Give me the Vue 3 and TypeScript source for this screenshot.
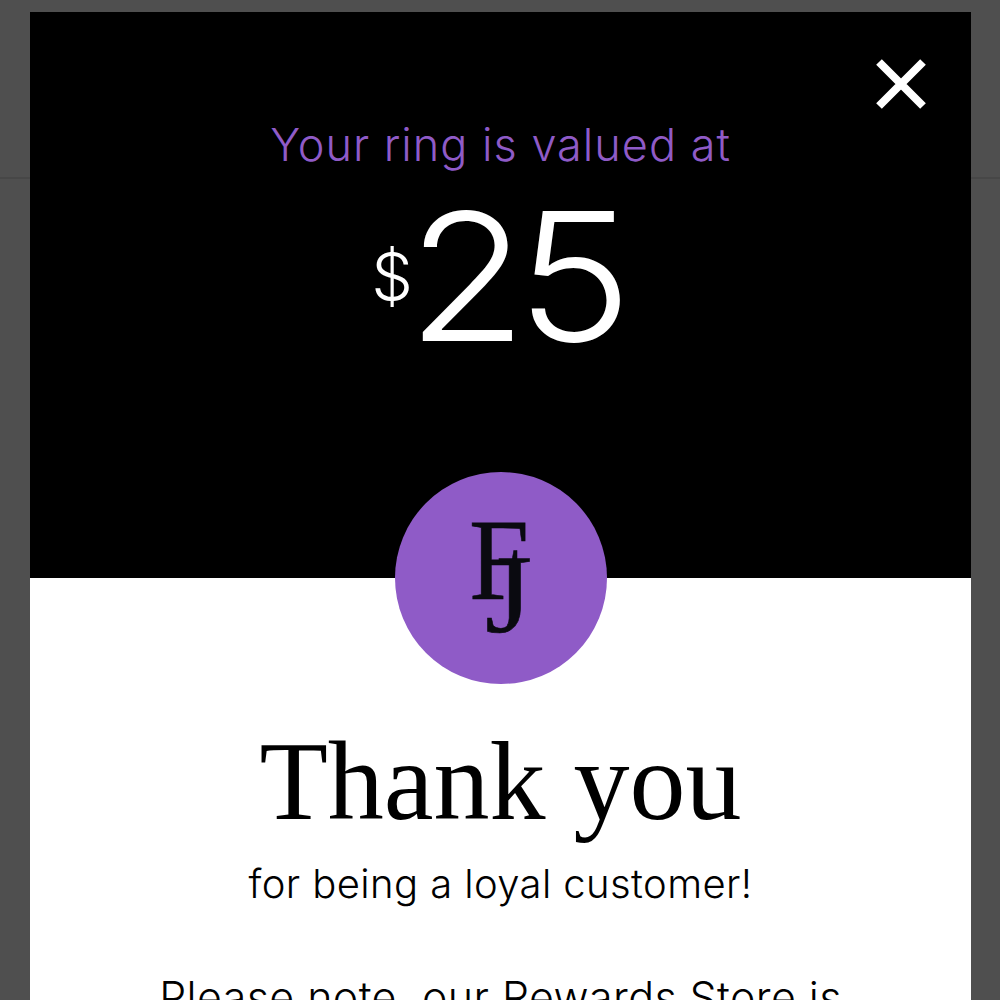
<template>
  <div class="page">
    <div class="page__bar"></div>
    <div class="modal">
      <div class="modal__head">
        <button class="modal__close" aria-label="Close">
          <svg width="50" height="50" viewBox="0 0 50 50">
            <path d="M3 3 L47 47 M47 3 L3 47" stroke="#fff" stroke-width="8" fill="none" />
          </svg>
        </button>
        <div class="modal__label">Your ring is valued at</div>
        <div class="modal__price">
          <span class="modal__currency">$</span>
          <span class="modal__amount">{{ amount }}</span>
        </div>
      </div>
      <div class="modal__logo">
        <svg class="logo" width="212" height="212" viewBox="0 0 212 212">
          <circle cx="106" cy="106" r="106" fill="#8f5bc7" />
          <text x="74" y="127" font-size="117" textLength="60" lengthAdjust="spacingAndGlyphs">F</text>
          <text x="90" y="160" font-size="113" textLength="47" lengthAdjust="spacingAndGlyphs">J</text>
        </svg>
      </div>
      <div class="modal__body">
        <h1 class="modal__title">Thank you</h1>
        <p class="modal__sub">for being a loyal customer!</p>
        <p class="modal__note">Please note, our Rewards Store is</p>
      </div>
    </div>
  </div>
</template>

<script setup lang="ts">
const amount = 25;
</script>

<style>
html,
body {
  height: 100%;
  overflow: hidden;
}
</style>

<style scoped>
.page {
  position: relative;
  height: 1000px;
  overflow: hidden;
  background: #4f4f4f;
  font-family: Inter, "Open Sans", sans-serif;
}

.page__bar {
  height: 177px;
  border-bottom: 2px solid #474747;
}

.modal {
  position: absolute;
  top: 12px;
  left: 30px;
  width: 941px;
  height: 1100px;
  background: #fff;
}

.modal__head {
  position: relative;
  height: 566px;
  box-sizing: border-box;
  padding-top: 106px;
  background: #000;
  text-align: center;
}

.modal__close {
  position: absolute;
  top: 47px;
  right: 45px;
  width: 50px;
  height: 50px;
  padding: 0;
  border: none;
  background: none;
}

.modal__label {
  color: #8f5bc7;
  font-size: 45px;
  font-weight: 350;
  line-height: 54px;
  letter-spacing: 1px;
}

.modal__price {
  display: flex;
  justify-content: center;
  margin-top: 10px;
  padding-right: 10px;
  color: #fff;
  font-weight: 350;
}

.modal__currency {
  margin-top: 56px;
  font-size: 66px;
  line-height: 76px;
  letter-spacing: -6px;
}

.modal__amount {
  font-size: 178px;
  line-height: 190px;
  letter-spacing: -10px;
  transform: scaleX(1.1);
  transform-origin: left;
  margin-right: 18px;
}

.modal__logo {
  position: relative;
  display: flex;
  justify-content: center;
  margin-top: -106px;
}

.logo {
  fill: #0a0a10;
  stroke: #0a0a10;
  stroke-width: 0.6;
  font-family: "Liberation Serif", serif;
}

.logo circle {
  stroke: none;
}

.modal__body {
  text-align: center;
  color: #000;
}

.modal__title {
  margin: 32px 0 0;
  font-family: "Liberation Serif", serif;
  font-size: 112px;
  font-weight: 400;
  line-height: 130px;
}

.modal__sub {
  margin: 14px 0 0;
  font-size: 40px;
  font-weight: 300;
  line-height: 48px;
  letter-spacing: 0.4px;
}

.modal__note {
  margin: 63px 0 0;
  font-size: 43px;
  font-weight: 300;
  line-height: 52px;
  letter-spacing: 0.4px;
}
</style>
